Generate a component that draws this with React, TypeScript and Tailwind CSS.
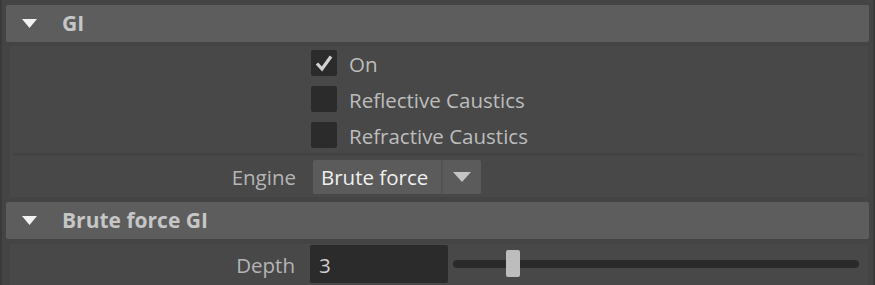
import { useState } from "react";

const font = { fontFamily: '"Open Sans", "Noto Sans", Arial, sans-serif' };

function SectionHeader({ title }: { title: string }) {
  return (
    <div className="flex h-[37px] items-center rounded-[2px] bg-[#5d5d5d]">
      <svg className="ml-[16px] h-[9px] w-[15px]" viewBox="0 0 15 9">
        <polygon points="0,0 15,0 7.5,9" fill="#f2f2f2" />
      </svg>
      <span className="ml-[25px] text-[21px] leading-none font-bold text-[#c6c6c6]">{title}</span>
    </div>
  );
}

function Check({ label, checked }: { label: string; checked?: boolean }) {
  return (
    <div className="flex h-[26px] items-center">
      <div className="grid size-[26px] place-items-center rounded-[2px] bg-[#2b2b2b]">
        {checked ? (
          <svg className="size-[20px]" viewBox="0 0 20 20">
            <path d="M3 10.5 L8 16 L17 3.5" fill="none" stroke="#d2d2d2" strokeWidth="3.2" />
          </svg>
        ) : null}
      </div>
      <span className="ml-[12px] pt-[2px] text-[20.5px] leading-none text-[#bdbdbd]">{label}</span>
    </div>
  );
}

export default function App() {
  const [depth] = useState(3);

  return (
    <div className="h-[285px] w-[875px] overflow-hidden border-x-2 border-[#3a3a3a] bg-[#444444] px-[4px] pt-[5px]" style={font}>
      <SectionHeader title="GI" />
      <div className="ml-[4px] mr-[1px] mt-[4px] bg-[#484848]">
        <div className="flex flex-col gap-[10px] pl-[301px] pt-[4px]">
          <Check label="On" checked />
          <Check label="Reflective Caustics" />
          <Check label="Refractive Caustics" />
        </div>
        <div className="mx-[3px] mr-[5px] mt-[5px] h-[3px] bg-[#444444]" />
        <div className="flex h-[41px] items-center">
          <span className="w-[286px] pt-[2px] text-right text-[20.5px] leading-none text-[#b5b5b5]">Engine</span>
          <div className="ml-[17px] flex h-[34px] w-[168px] items-stretch rounded-[2px] bg-[#5b5b5b]">
            <span className="flex flex-1 items-center pl-[8px] pt-[2px] text-[20.5px] leading-none text-[#efefef]">Brute force</span>
            <div className="w-[2px] bg-[#535353]" />
            <div className="grid w-[38px] place-items-center">
              <svg className="h-[10px] w-[18px]" viewBox="0 0 18 10">
                <polygon points="0,0 18,0 9,10" fill="#c4c4c4" />
              </svg>
            </div>
          </div>
        </div>
      </div>
      <div className="mt-[5px]">
        <SectionHeader title="Brute force GI" />
      </div>
      <div className="ml-[4px] mr-[1px] mt-[5px] h-[45px] bg-[#484848] pt-[1px]">
        <div className="flex h-[38px] items-center">
          <span className="w-[285px] pt-[2px] text-right text-[20.5px] leading-none text-[#b5b5b5]">Depth</span>
          <div className="ml-[15px] flex h-[38px] w-[138px] items-center rounded-[2px] bg-[#2b2b2b] pl-[9px] pt-[2px] text-[20.5px] leading-none text-[#d0d0d0]">
            {depth}
          </div>
          <div className="relative ml-[5px] mr-[9px] flex h-[38px] flex-1 items-center">
            <div className="h-[8px] w-full rounded-full bg-[#2b2b2b]" />
            <div className="absolute left-[53px] top-[5px] h-[27px] w-[14px] rounded-[2px] bg-[#bdbdbd]" />
          </div>
        </div>
      </div>
    </div>
  );
}
